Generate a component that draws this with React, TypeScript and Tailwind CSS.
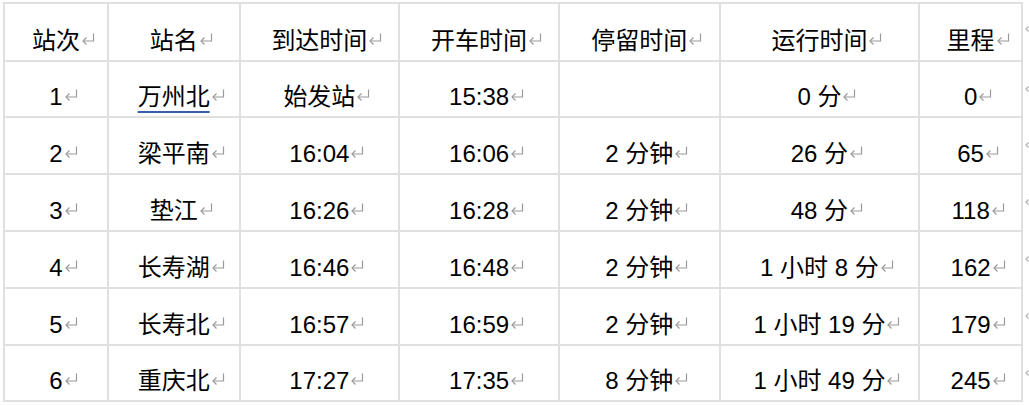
const headers = ["站次", "站名", "到达时间", "开车时间", "停留时间", "运行时间", "里程"]

const rows = [
  ["1", "万州北", "始发站", "15:38", "", "0 分", "0"],
  ["2", "梁平南", "16:04", "16:06", "2 分钟", "26 分", "65"],
  ["3", "垫江", "16:26", "16:28", "2 分钟", "48 分", "118"],
  ["4", "长寿湖", "16:46", "16:48", "2 分钟", "1 小时 8 分", "162"],
  ["5", "长寿北", "16:57", "16:59", "2 分钟", "1 小时 19 分", "179"],
  ["6", "重庆北", "17:27", "17:35", "8 分钟", "1 小时 49 分", "245"],
]

const rowHeights = ["h-[56px]", "h-[57px]", "h-[57px]", "h-[57px]", "h-[57px]", "h-[56px]"]

function ReturnMark({ className = "" }: { className?: string }) {
  return (
    <svg width="14" height="12" viewBox="0 0 14 12" className={className} fill="none" stroke="#9a9a9a" strokeWidth="1.2">
      <path d="M12.5 0.5 V8 H2" />
      <path d="M5.5 4.5 L2 8 L5.5 11.5" />
    </svg>
  )
}

function CellText({ text, underline = false }: { text: string; underline?: boolean }) {
  if (!text) return null
  return (
    <span className="relative">
      <span className={underline ? "underline decoration-[#3b5ca6] decoration-2 underline-offset-[6px]" : ""}>{text}</span>
      <ReturnMark className="absolute left-full top-[4px] ml-[1px]" />
    </span>
  )
}

function RowEnd() {
  return (
    <div className="flex items-start pt-[24px] pl-[2px]">
      <svg width="4" height="8" viewBox="0 0 4 8" fill="none" stroke="#b0b0b0" strokeWidth="1.2">
        <path d="M3.5 0.5 L1 3 L3.5 5.5" />
      </svg>
    </div>
  )
}

export default function App() {
  const cell = "flex items-end justify-center pb-[7px] border-r-2 border-b-2 border-[#e0e0e0]"
  const widths = ["w-[106px]", "w-[132px]", "w-[160px]", "w-[160px]", "w-[161px]", "w-[200px]", "w-[103px]"]

  return (
    <div className="w-[1029px] h-[406px] overflow-hidden bg-white pt-[2px] pl-[3px] text-black text-[24px] leading-[24px] font-['Liberation_Sans','Noto_Sans_CJK_SC',sans-serif]">
      <div className="flex h-[60px]">
        {headers.map((h, i) => (
          <div key={h} className={`${cell} ${widths[i]} border-t-2 ${i === 0 ? "border-l-2" : ""}`}>
            <CellText text={h} />
          </div>
        ))}
        <RowEnd />
      </div>
      {rows.map((r, ri) => (
        <div key={ri} className={`flex ${rowHeights[ri]}`}>
          {r.map((c, ci) => (
            <div key={ci} className={`${cell} ${widths[ci]} ${ci === 0 ? "border-l-2" : ""}`}>
              <CellText text={c} underline={ri === 0 && ci === 1} />
            </div>
          ))}
          <RowEnd />
        </div>
      ))}
    </div>
  )
}
